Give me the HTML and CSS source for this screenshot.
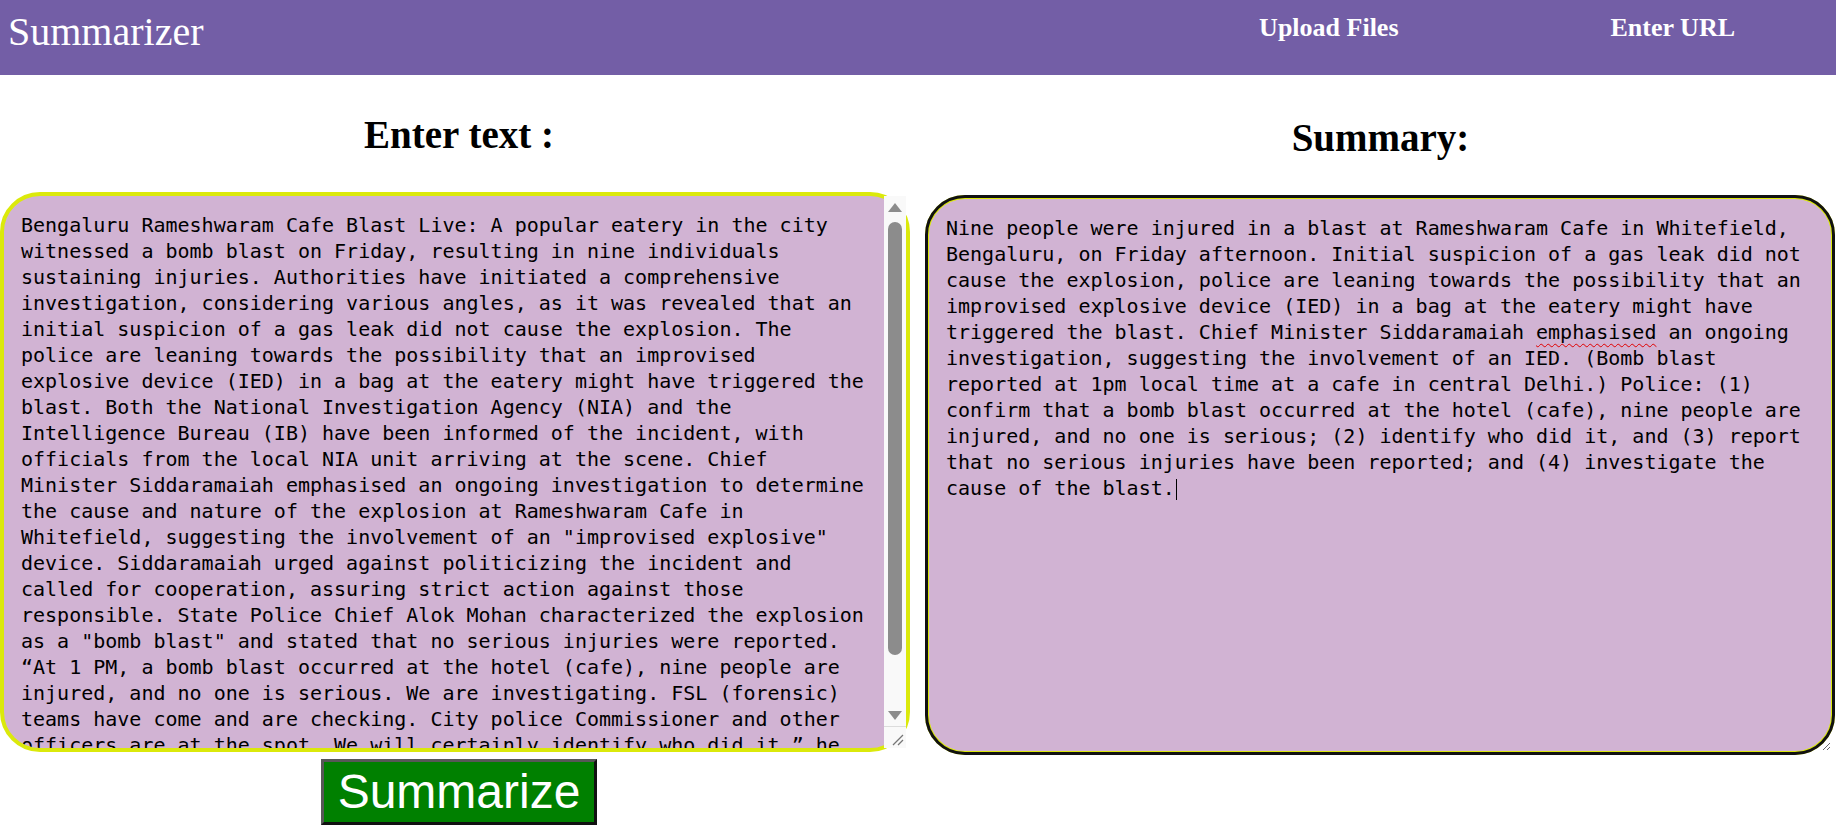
FILE: index.html
```html
<!DOCTYPE html>
<html lang="en">
<head>
<meta charset="utf-8">
<title>Summarizer</title>
<link rel="stylesheet" href="styles.css">
</head>
<body>
<header class="topbar">
  <div class="brand">Summarizer</div>
  <nav class="nav">
    <a class="nav-link" href="#">Upload Files</a>
    <a class="nav-link" href="#">Enter URL</a>
  </nav>
</header>
<main class="panes">
  <section class="pane pane-input">
    <h2 class="pane-title">Enter text :</h2>
    <div class="editor">
      <textarea class="box src" spellcheck="false">Bengaluru Rameshwaram Cafe Blast Live: A popular eatery in the city witnessed a bomb blast on Friday, resulting in nine individuals sustaining injuries. Authorities have initiated a comprehensive investigation, considering various angles, as it was revealed that an initial suspicion of a gas leak did not cause the explosion. The police are leaning towards the possibility that an improvised explosive device (IED) in a bag at the eatery might have triggered the blast. Both the National Investigation Agency (NIA) and the Intelligence Bureau (IB) have been informed of the incident, with officials from the local NIA unit arriving at the scene. Chief Minister Siddaramaiah emphasised an ongoing investigation to determine the cause and nature of the explosion at Rameshwaram Cafe in Whitefield, suggesting the involvement of an "improvised explosive" device. Siddaramaiah urged against politicizing the incident and called for cooperation, assuring strict action against those responsible. State Police Chief Alok Mohan characterized the explosion as a "bomb blast" and stated that no serious injuries were reported. “At 1 PM, a bomb blast occurred at the hotel (cafe), nine people are injured, and no one is serious. We are investigating. FSL (forensic) teams have come and are checking. City police Commissioner and other officers are at the spot. We will certainly identify who did it,” he said.</textarea>
      <div class="vscroll" aria-hidden="true">
        <span class="vs-btn"><span class="vs-arrow-up"></span></span>
        <span class="vs-track"><span class="vs-thumb"></span></span>
        <span class="vs-btn"><span class="vs-arrow-down"></span></span>
        <span class="vs-corner">
          <svg class="grip" width="22" height="22" viewBox="0 0 22 22"><path d="M9 19 L19 9 M14 19 L19 14" stroke="#767676" stroke-width="1.3" fill="none"/></svg>
        </span>
      </div>
    </div>
    <button class="go" type="button">Summarize</button>
  </section>
  <section class="pane pane-output">
    <h2 class="pane-title">Summary:</h2>
    <div class="box out">Nine people were injured in a blast at Rameshwaram Cafe in Whitefield, Bengaluru, on Friday afternoon. Initial suspicion of a gas leak did not cause the explosion, police are leaning towards the possibility that an improvised explosive device (IED) in a bag at the eatery might have triggered the blast. Chief Minister Siddaramaiah <span class="misspelt">emphasised</span> an ongoing investigation, suggesting the involvement of an IED. (Bomb blast reported at 1pm local time at a cafe in central Delhi.) Police: (1) confirm that a bomb blast occurred at the hotel (cafe), nine people are injured, and no one is serious; (2) identify who did it, and (3) report that no serious injuries have been reported; and (4) investigate the cause of the blast.<span class="caret"></span></div>
  </section>
</main>
</body>
</html>
```

FILE: styles.css
```css
* {
  box-sizing: border-box;
}

body {
  margin: 0;
  background: #ffffff;
  color: #000000;
  font-family: "Liberation Serif", "Times New Roman", serif;
}

/* ---------- top bar ---------- */
.topbar {
  height: 75px;
  background: #735ea6;
  color: #ffffff;
  display: flex;
  justify-content: space-between;
  align-items: flex-start;
  padding: 9px 101px 0 8px;
}

.brand {
  font-size: 40px;
  line-height: 46px;
}

.nav {
  display: flex;
  gap: 212px;
  margin-top: 4px;
}

.nav-link {
  color: #ffffff;
  text-decoration: none;
  font-weight: bold;
  font-size: 26px;
  line-height: 30px;
}

/* ---------- panes ---------- */
.panes {
  display: grid;
  grid-template-columns: 918px 918px;
}

.pane {
  display: flex;
  flex-direction: column;
  align-items: flex-start;
}

.pane-output {
  padding: 3px 0 0 7px;
}

.pane-title {
  align-self: stretch;
  margin: 38px 0 35px;
  font-size: 39px;
  line-height: 44px;
  font-weight: bold;
  text-align: center;
}

.box {
  display: block;
  width: 910px;
  height: 560px;
  margin: 0;
  border: 4px solid #dbe90b;
  border-radius: 40px;
  background: #d1b3d3;
  color: #000000;
  font-family: "DejaVu Sans Mono", "Liberation Mono", monospace;
  font-size: 20px;
  line-height: 26px;
}

/* ---------- input editor with its scrollbar ---------- */
.editor {
  position: relative;
  width: 910px;
  height: 560px;
}

.src {
  padding: 16px 37px 16px 17px;
  overflow: hidden;
  resize: none;
  outline: none;
}

.vscroll {
  position: absolute;
  top: 4px;
  right: 4px;
  bottom: 4px;
  width: 22px;
  background: #f9f9f9;
  display: flex;
  flex-direction: column;
}

.vs-btn {
  height: 22px;
  flex: none;
  display: flex;
  align-items: center;
  justify-content: center;
}

.vs-arrow-up {
  width: 0;
  height: 0;
  border-left: 7px solid transparent;
  border-right: 7px solid transparent;
  border-bottom: 9px solid #8c8c8c;
}

.vs-arrow-down {
  width: 0;
  height: 0;
  border-left: 7px solid transparent;
  border-right: 7px solid transparent;
  border-top: 9px solid #8c8c8c;
}

.vs-track {
  flex: 1;
  padding: 4px;
}

.vs-thumb {
  display: block;
  height: 433px;
  background: #8c8c8c;
  border-radius: 7px;
}

.vs-corner {
  height: 22px;
  flex: none;
  border-top: 1px solid #dcdcdc;
  display: block;
}

.grip {
  display: block;
  margin-top: -1px;
}

/* ---------- output ---------- */
.out {
  padding: 16px 24px 16px 17px;
  overflow: auto;
  resize: both;
  outline: 3px solid #111111;
  outline-offset: -3px;
}

.misspelt {
  text-decoration: underline wavy #e00000;
  text-decoration-thickness: 1px;
  text-underline-offset: 4px;
}

.caret {
  display: inline-block;
  width: 1px;
  height: 21px;
  margin-left: 1px;
  vertical-align: -5px;
  background: #000000;
}

/* ---------- button ---------- */
.go {
  align-self: center;
  margin-top: 7px;
  width: 276px;
  height: 66px;
  padding: 0;
  background: #008000;
  color: #ffffff;
  font-family: "Liberation Sans", Arial, sans-serif;
  font-size: 48px;
  line-height: 54px;
  border-style: solid;
  border-width: 3px;
  border-color: #575757 #111111 #111111 #575757;
  cursor: pointer;
}
```
